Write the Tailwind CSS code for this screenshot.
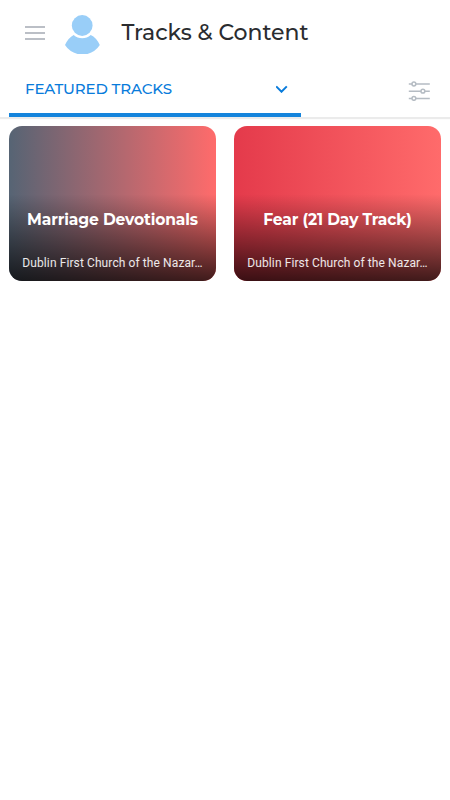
<!DOCTYPE html>
<html lang="en">
  <head>
    <meta charset="UTF-8" />
    <meta name="viewport" content="width=device-width, initial-scale=1.0" />
    <title>Tracks &amp; Content</title>
    <script src="https://cdn.jsdelivr.net/npm/@tailwindcss/browser@4"></script>
  </head>
  <body class="bg-white font-['Montserrat','Inter',sans-serif]">
    <div class="min-h-screen flex flex-col overflow-hidden">
      <!-- Header -->
      <header class="h-[65px] flex items-center pl-[25px]">
        <button class="w-5 h-[14px] flex flex-col justify-between" aria-label="Open menu">
          <span class="block w-full h-[2px] bg-[#bbbfc6]"></span>
          <span class="block w-full h-[2px] bg-[#bbbfc6]"></span>
          <span class="block w-full h-[2px] bg-[#bbbfc6]"></span>
        </button>
        <svg class="ml-5 mt-[3px] w-[35px] h-[39px]" viewBox="0 0 35 39" fill="#99cef8">
          <circle cx="17.2" cy="10.5" r="10.4" />
          <path d="M8.7 20Q12.3 23.2 17.2 23.2Q22.1 23.2 25.7 20Q31.4 22.5 34.8 30.1Q30.5 36.8 22.5 39H12.5Q4.3 36.8 0 30.1Q3.2 22.8 8.7 20Z" />
        </svg>
        <h1 class="ml-[21.5px] mt-px text-[22px] leading-7 font-medium tracking-[-0.05px] text-[#2a2c2f] whitespace-nowrap">Tracks &amp; Content</h1>
      </header>

      <!-- Track filter -->
      <nav class="h-[52px] flex items-stretch justify-between pl-[9px] pr-5 shadow-[0_2px_1px_rgba(0,0,0,0.08)]">
        <button class="w-[292px] flex items-center justify-between pl-4 pr-[13.5px] border-b-4 border-[#1584dc] text-[#087bdb]">
          <span class="text-[15px] leading-5 font-medium tracking-[-0.14px] whitespace-nowrap">FEATURED TRACKS</span>
          <svg class="w-3 h-2" viewBox="0 0 12 8" fill="none" stroke="currentColor" stroke-width="2">
            <path d="M.2 1.4L5.5 6.7L10.8 1.4" />
          </svg>
        </button>
        <button class="self-center" aria-label="Filter">
          <svg class="w-[22px] h-5" viewBox="0 0 22 20" fill="#fff" stroke="#b5bcc3" stroke-width="1.5">
            <path d="M.8 3H21.8M.8 10.2H21.8M.8 17.4H21.8" />
            <circle cx="5.9" cy="3" r="1.9" />
            <circle cx="14.9" cy="10.2" r="1.9" />
            <circle cx="5.9" cy="17.4" r="1.9" />
          </svg>
        </button>
      </nav>

      <!-- Tracks -->
      <main class="grid grid-cols-2 gap-[18px] px-[9px] pt-[9px]">
        <article class="h-[155px] rounded-[13px] overflow-hidden bg-linear-to-r/srgb from-[#566474] to-[#ff6b6b]">
          <div class="h-full flex flex-col items-center text-white bg-[linear-gradient(to_bottom,transparent_44%,rgba(0,0,0,0.75))]">
            <h2 class="mt-[84px] text-[15.5px] leading-5 font-bold tracking-[-0.12px] whitespace-nowrap">Marriage Devotionals</h2>
            <p class="mt-[25px] font-['Roboto',sans-serif] text-[12px] leading-4 tracking-[0.1px] text-white/90 whitespace-nowrap">Dublin First Church of the Nazar…</p>
          </div>
        </article>
        <article class="h-[155px] rounded-[13px] overflow-hidden bg-linear-to-r/srgb from-[#e43a4b] to-[#ff6b6b]">
          <div class="h-full flex flex-col items-center text-white bg-[linear-gradient(to_bottom,transparent_44%,rgba(0,0,0,0.75))]">
            <h2 class="mt-[84px] text-[15.5px] leading-5 font-bold tracking-[-0.12px] whitespace-nowrap">Fear (21 Day Track)</h2>
            <p class="mt-[25px] font-['Roboto',sans-serif] text-[12px] leading-4 tracking-[0.1px] text-white/90 whitespace-nowrap">Dublin First Church of the Nazar…</p>
          </div>
        </article>
      </main>
    </div>
  </body>
</html>
